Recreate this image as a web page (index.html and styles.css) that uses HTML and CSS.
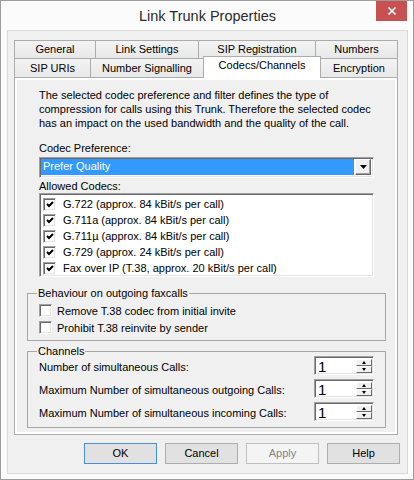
FILE: index.html
```html
<!DOCTYPE html>
<html>
  <head>
    <meta charset="utf-8">
    <title>Link Trunk Properties</title>
    <link rel="stylesheet" href="styles.css">
  </head>
  <body>
  <div class="window">
    <div class="titlebar">
      <span class="title">Link Trunk Properties</span>
      <div class="close">
        <svg width="10" height="10" viewBox="0 0 10 10"><path d="M1.5 1.5L8.5 8.5M8.5 1.5L1.5 8.5" stroke="#fff" stroke-width="1.7"/></svg>
      </div>
    </div>

    <div class="client">
      <div class="tabrow">
        <div class="tab t-general">General</div>
        <div class="tab t-link">Link Settings</div>
        <div class="tab t-sipreg">SIP Registration</div>
        <div class="tab t-numbers">Numbers</div>
      </div>
      <div class="tabrow front">
        <div class="tab t-uris">SIP URIs</div>
        <div class="tab t-signal">Number Signalling</div>
        <div class="tab t-codecs active">Codecs/Channels</div>
        <div class="tab t-encrypt">Encryption</div>
      </div>

      <div class="panel">
        <div class="page">
          <p class="intro">The selected codec preference and filter defines the type of<br>compression for calls using this Trunk. Therefore the selected codec<br>has an impact on the used bandwidth and the quality of the call.</p>

          <div class="label first">Codec Preference:</div>
          <div class="combo">
            <div class="combo-value">Prefer Quality</div>
            <div class="combo-btn">
              <svg width="7" height="4" viewBox="0 0 7 4"><polygon points="0,0 7,0 3.5,4" fill="#000"/></svg>
            </div>
          </div>

          <div class="label">Allowed Codecs:</div>
          <div class="listbox">
            <div class="item"><span class="cb"><svg width="8" height="7" viewBox="0 0 8 7"><path d="M1 3L3 5L7 1" stroke="#000" stroke-width="2" fill="none"/></svg></span><span class="item-text">G.722 (approx. 84 kBit/s per call)</span></div>
            <div class="item"><span class="cb"><svg width="8" height="7" viewBox="0 0 8 7"><path d="M1 3L3 5L7 1" stroke="#000" stroke-width="2" fill="none"/></svg></span><span class="item-text">G.711a (approx. 84 kBit/s per call)</span></div>
            <div class="item"><span class="cb"><svg width="8" height="7" viewBox="0 0 8 7"><path d="M1 3L3 5L7 1" stroke="#000" stroke-width="2" fill="none"/></svg></span><span class="item-text">G.711µ (approx. 84 kBit/s per call)</span></div>
            <div class="item"><span class="cb"><svg width="8" height="7" viewBox="0 0 8 7"><path d="M1 3L3 5L7 1" stroke="#000" stroke-width="2" fill="none"/></svg></span><span class="item-text">G.729 (approx. 24 kBit/s per call)</span></div>
            <div class="item"><span class="cb"><svg width="8" height="7" viewBox="0 0 8 7"><path d="M1 3L3 5L7 1" stroke="#000" stroke-width="2" fill="none"/></svg></span><span class="item-text">Fax over IP (T.38, approx. 20 kBit/s per call)</span></div>
          </div>

          <fieldset class="group fax">
            <legend>Behaviour on outgoing faxcalls</legend>
            <div class="check-row"><span class="cb"></span><span>Remove T.38 codec from initial invite</span></div>
            <div class="check-row"><span class="cb"></span><span>Prohibit T.38 reinvite by sender</span></div>
          </fieldset>

          <fieldset class="group channels">
            <legend>Channels</legend>
            <div class="spin-row">
              <span class="spin-label">Number of simultaneous Calls:</span>
              <div class="spinner"><span class="spin-value">1</span><div class="spin-btns"><span class="spin-up"></span><span class="spin-down"></span></div></div>
            </div>
            <div class="spin-row">
              <span class="spin-label">Maximum Number of simultaneous outgoing Calls:</span>
              <div class="spinner"><span class="spin-value">1</span><div class="spin-btns"><span class="spin-up"></span><span class="spin-down"></span></div></div>
            </div>
            <div class="spin-row">
              <span class="spin-label">Maximum Number of simultaneous incoming Calls:</span>
              <div class="spinner"><span class="spin-value">1</span><div class="spin-btns"><span class="spin-up"></span><span class="spin-down"></span></div></div>
            </div>
          </fieldset>
        </div>
      </div>

      <div class="buttons">
        <div class="btn default">OK</div>
        <div class="btn">Cancel</div>
        <div class="btn disabled">Apply</div>
        <div class="btn">Help</div>
      </div>
    </div>
  </div>
  </body>
</html>
```

FILE: styles.css
```css
*{
    box-sizing: border-box;
}
body{
    margin: 0;
    background-color: #ffffff;
    font-family: "Liberation Sans", Arial, sans-serif;
    font-size: 11px;
    color: #000000;
}

/* window frame */
.window{
    position: relative;
    width: 414px;
    height: 480px;
    border: 1px solid #9c9c9c;
    background-color: #fbfbfb;
    padding: 0 5px 0 6px;
}
.titlebar{
    height: 29px;
    display: flex;
    align-items: center;
    justify-content: center;
}
.title{
    font-size: 14.5px;
    color: #2b2b2b;
}
.close{
    position: absolute;
    top: 0;
    right: 6px;
    width: 31px;
    height: 20px;
    background-color: #c75050;
    display: flex;
    align-items: center;
    justify-content: center;
}
.client{
    height: 444px;
    border: 1px solid #d9d9d9;
    background-color: #f0f0f0;
    padding: 9px 7px 0 6px;
}

/* tabs */
.tabrow{
    display: flex;
    align-items: flex-start;
}
.tab{
    height: 19px;
    border: 1px solid #acacac;
    background: linear-gradient(#f3f3f3, #e8e8e8);
    margin-left: -1px;
    text-align: center;
    line-height: 17px;
    white-space: nowrap;
}
.tab:first-child{
    margin-left: 0;
}
.front .tab{
    margin-top: -1px;
    border-bottom: none;
    line-height: 18px;
}
.front .tab.active{
    position: relative;
    z-index: 1;
    margin-top: -3px;
    margin-bottom: -1px;
    height: 22px;
    background: #ffffff;
    line-height: 17px;
}
.t-general{ width: 82px; }
.t-link{ width: 104px; }
.t-sipreg{ width: 118px; }
.t-numbers{ width: 83px; }
.t-uris{ width: 77px; }
.t-signal{ width: 114px; }
.t-codecs{ width: 118px; }
.t-encrypt{ width: 78px; }

.panel{
    width: 384px;
    height: 358px;
    border: 1px solid #acacac;
    background-color: #ffffff;
    padding: 2px;
}
.page{
    height: 100%;
    background-color: #f0f0f0;
    padding: 8px 0 0 22px;
}
.intro{
    margin: 0;
    line-height: 14px;
}
.label{
    line-height: 13px;
    margin-top: 2px;
}
.label.first{
    margin-top: 12px;
}

/* sunken 3d edge */
.combo, .listbox, .cb, .spinner{
    border: 1px solid;
    border-color: #a0a0a0 #ffffff #ffffff #a0a0a0;
    box-shadow: inset 1px 1px 0 #696969, inset -1px -1px 0 #e3e3e3;
    background-color: #ffffff;
}
.combo{
    width: 335px;
    height: 21px;
    margin-top: 2px;
    padding: 2px 2px 2px 1px;
    display: flex;
    gap: 1px;
}
.combo-value{
    flex: 1;
    background-color: #3399ff;
    color: #ffffff;
    padding-left: 2px;
    line-height: 15px;
    margin-top: -1px;
}
.combo-btn{
    width: 16px;
    margin-top: -1px;
    background-color: #f0f0f0;
    border: 1px solid;
    border-color: #ffffff #696969 #696969 #ffffff;
    box-shadow: inset -1px -1px 0 #a0a0a0;
    display: flex;
    align-items: center;
    justify-content: center;
}
.listbox{
    width: 335px;
    height: 84px;
    padding: 2px;
}
.item{
    height: 16px;
    display: flex;
    align-items: center;
}
.item .cb{
    margin-left: 1px;
}
.item-text{
    margin-left: 7px;
}
.cb{
    width: 13px;
    height: 13px;
    flex: none;
    display: flex;
    align-items: center;
    justify-content: center;
}

/* group boxes */
.group{
    width: 359px;
    margin: 11px 0 0 -12px;
    border: 1px solid #a6a6a6;
    padding: 4px 11px 4px 11px;
    min-width: 0;
}
.group legend{
    padding: 0 1px;
    margin-left: -2px;
    line-height: 10px;
}
.check-row{
    height: 17px;
    display: flex;
    align-items: center;
    gap: 5px;
}
.channels{
    margin-top: 5px;
    padding: 0 11px 6px 11px;
    display: flex;
    flex-direction: column;
    gap: 4px;
}
.spin-row{
    height: 19px;
    display: flex;
    justify-content: space-between;
    align-items: center;
}
.spin-label{
    padding-top: 3px;
}
.spinner{
    width: 60px;
    height: 19px;
    padding: 2px 1px 1px 2px;
    display: flex;
}
.spin-value{
    flex: 1;
    font-size: 15px;
    line-height: 15px;
    padding-left: 1px;
}
.spin-btns{
    width: 16px;
    display: flex;
    flex-direction: column;
}
.spin-up, .spin-down{
    height: 7.5px;
    background-color: #f0f0f0;
    border: 1px solid;
    border-color: #ffffff #696969 #696969 #ffffff;
    display: flex;
    align-items: center;
    justify-content: center;
}
.spin-up::after{
    content: "";
    border-left: 2.5px solid transparent;
    border-right: 2.5px solid transparent;
    border-bottom: 3px solid #000000;
}
.spin-down::after{
    content: "";
    border-left: 2.5px solid transparent;
    border-right: 2.5px solid transparent;
    border-top: 3px solid #000000;
}

/* dialog buttons */
.buttons{
    display: flex;
    justify-content: flex-end;
    gap: 8px;
    margin-top: 8px;
}
.btn{
    width: 73px;
    height: 21px;
    border: 1px solid #adadad;
    background-color: #e1e1e1;
    text-align: center;
    line-height: 19px;
}
.btn.default{
    border-color: #4a90d9;
}
.btn.disabled{
    border-color: #bfbfbf;
    background-color: #f4f4f4;
    color: #838383;
}
```
